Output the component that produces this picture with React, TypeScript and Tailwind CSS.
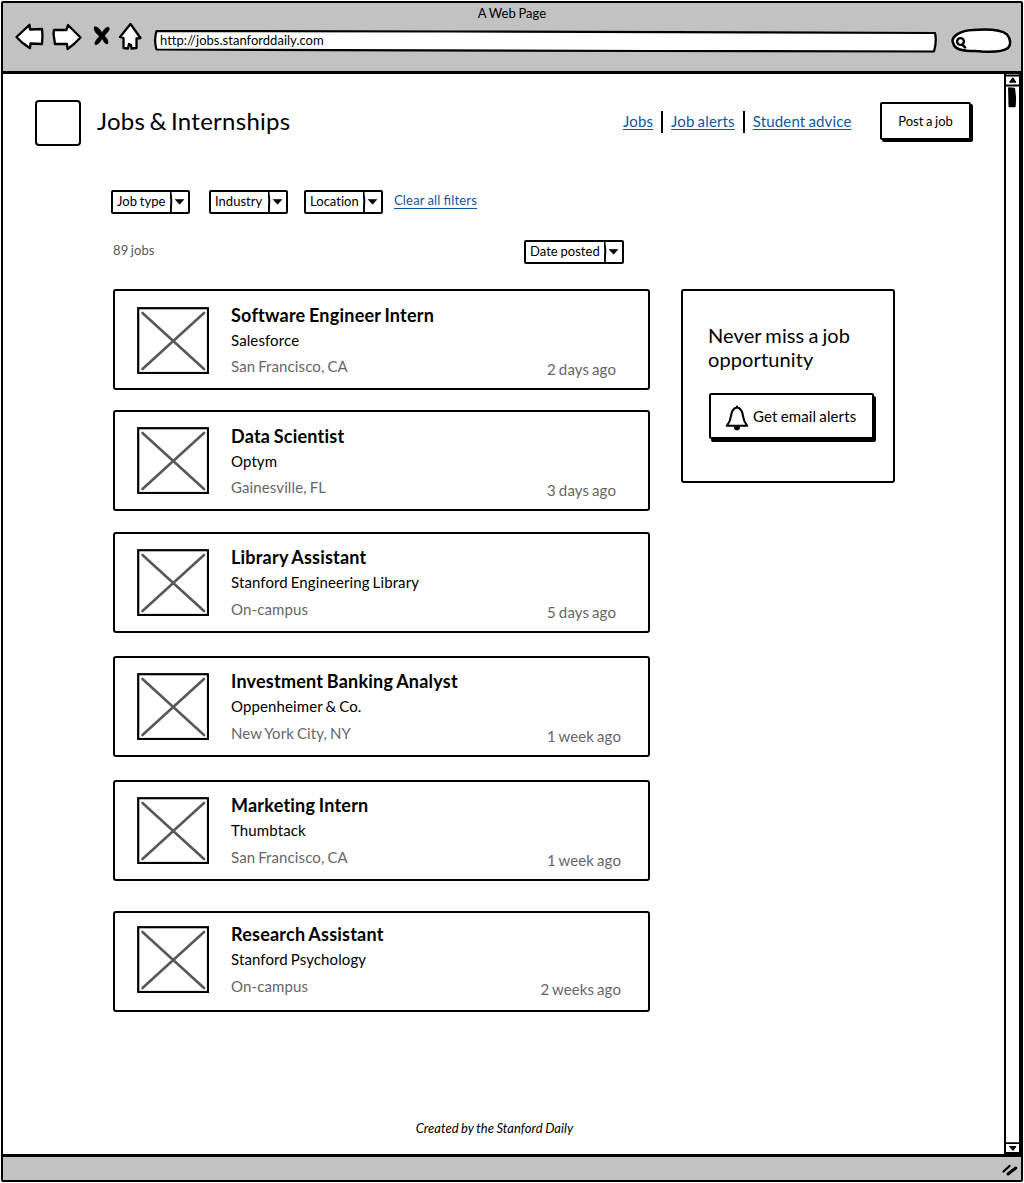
import React from "react";

const jobs = [
  { title: "Software Engineer Intern", company: "Salesforce", place: "San Francisco, CA", age: "2 days ago", box: "mt-0 pt-[16px]", text: "mt-[-4px]", gap: "mt-[5px]", date: "mt-[51px] mr-[32px]" },
  { title: "Data Scientist", company: "Optym", place: "Gainesville, FL", age: "3 days ago", box: "mt-[20px] pt-[15px]", text: "mt-[-3px]", gap: "mt-[5px]", date: "mt-[52px] mr-[32px]" },
  { title: "Library Assistant", company: "Stanford Engineering Library", place: "On-campus", age: "5 days ago", box: "mt-[21px] pt-[15px]", text: "mt-[-4px]", gap: "mt-[6px]", date: "mt-[52px] mr-[32px]" },
  { title: "Investment Banking Analyst", company: "Oppenheimer & Co.", place: "New York City, NY", age: "1 week ago", box: "mt-[23px] pt-[15px]", text: "mt-[-4px]", gap: "mt-[6px]", date: "mt-[52px] mr-[27px]" },
  { title: "Marketing Intern", company: "Thumbtack", place: "San Francisco, CA", age: "1 week ago", box: "mt-[23px] pt-[15px]", text: "mt-[-4px]", gap: "mt-[6px]", date: "mt-[52px] mr-[27px]" },
  { title: "Research Assistant", company: "Stanford Psychology", place: "On-campus", age: "2 weeks ago", box: "mt-[30px] pt-[13px]", text: "mt-[-4px]", gap: "mt-[6px]", date: "mt-[52px] mr-[27px]" },
];

function Select({ label, className }: { label: string; className: string }) {
  return (
    <div className={`flex h-[24px] rounded-[2px] border-2 border-black bg-white text-[13px] leading-[19px] tracking-[0.03px] [word-spacing:-0.6px] ${className}`}>
      <span className="flex-1 whitespace-nowrap pl-[4px]">{label}</span>
      <span className="flex w-[18px] items-center justify-center">
        <svg width="18" height="20" viewBox="0 0 18 20" className="block">
          <path d="M0.4 0L1.3 8L0.8 20" fill="none" stroke="#000" strokeWidth="2" />
          <path d="M5.200 7.500h8.600l-4.200 4.800z" fill="#000" stroke="#000" strokeWidth="0.6" strokeLinejoin="round" />
        </svg>
      </span>
    </div>
  );
}

function Placeholder() {
  return (
    <svg width="72" height="67" viewBox="0 0 72 67" className="block shrink-0">
      <rect x="1.2" y="1.2" width="69.8" height="64.8" fill="#fff" stroke="#000" strokeWidth="2.2" />
      <path d="M5.5 6L67 62M67 6L5.5 62" stroke="#585858" strokeWidth="2.6" strokeLinecap="round" />
    </svg>
  );
}

function Toolbar() {
  return (
    <div className="h-[71px] shrink-0 border-b-[3px] border-black bg-[#c2c2c2]">
      <div className="h-[20px] pt-[1px] text-center text-[13px] leading-[18px] tracking-[0.03px] [word-spacing:-0.6px]">A Web Page</div>
      <div className="flex items-start">
        <svg width="140" height="34" viewBox="3 23 140 34" fill="#fff" stroke="#000" strokeWidth="2.3" strokeLinejoin="round" strokeLinecap="round" className="block shrink-0">
          <path d="M16.500 37L29.500 24.800L30 29.500L42 29L42.500 36L42 44L30.500 43.500L30 48.200L22 42.500Z" />
          <path d="M80.500 37.500L68 25L66.500 30L54 30L53.500 34L55 44L67 44L67.500 49L74 44Z" />
          <path d="M130.500 24L120 37L123.500 38L123.500 48L128 48.500L129 44L131 45L131.500 48.500L136.500 48L136.500 38.500L140.500 38Z" />
          <path d="M94.500 27C98 26 101 31 102 33C103 31 106 26 109 27.500C110.500 31 105 34 104.500 36C107 38 109 42 107.500 44C104 44 103.500 40 102 38.500C100.500 41 98 45.500 95 44.500C94 42 98 38 99.500 36C96.500 34 93 30 94.500 27Z" fill="#000" strokeWidth="0.6" />
        </svg>
        <div className="relative ml-[11px] mt-[6px] h-[24px] w-[783px] pl-[6px] text-[13px] leading-[22px] tracking-[0.02px]">
          <svg width="783" height="24" viewBox="0 0 783 24" fill="#fff" stroke="#000" strokeWidth="2.200" strokeLinejoin="round" className="absolute inset-0">
            <path d="M2.500 2L300 2.500L600 3.400L781 4C782.500 10 781.500 17 780 22.500L500 22L2.500 20.500C0.500 14 0.800 8 2.500 2Z" />
          </svg>
          <span className="relative">http://jobs.stanforddaily.com</span>
        </div>
        <svg width="62" height="26" viewBox="950 27 62 26" fill="#fff" stroke="#000" className="ml-[13px] mt-[4px] block">
          <path d="M952.500 41C952.500 36 960 30.500 973 30C987 29 1002 30 1007 34.500C1011 39 1011 45 1008 48C1003 51.500 990 52 982 51.500C971 50.500 958 52 953.800 45Z" strokeWidth="2.500" />
          <circle cx="960.5" cy="41.500" r="3.400" strokeWidth="2.400" />
          <path d="M962.500 44.800L965 47.300" strokeWidth="2.600" strokeLinecap="round" />
        </svg>
      </div>
    </div>
  );
}

function ScrollBar() {
  return (
    <div className="flex h-full w-[17px] shrink-0 flex-col border-x-2 border-black bg-white">
      <svg width="13" height="34" viewBox="0 0 13 34" className="block">
        <path d="M0 1.500h13M0 11.500h13" stroke="#000" strokeWidth="1.800" />
        <path d="M3.500 8.200L6.800 3.800L10 8.200z" fill="#000" stroke="#000" strokeLinejoin="round" />
        <path d="M2.800 14L8.400 14.500L9.400 24L9 32.500L3.200 32.500L3 23Z" fill="#000" stroke="#000" strokeWidth="1.400" strokeLinejoin="round" />
      </svg>
      <div className="flex-1" />
      <svg width="13" height="13" viewBox="0 0 13 13" className="block">
        <path d="M0 2.200h13M0 12h13" stroke="#000" strokeWidth="1.800" />
        <path d="M3.500 5.500h6.500L7 9.500z" fill="#000" stroke="#000" strokeLinejoin="round" />
      </svg>
    </div>
  );
}

export default function App() {
  return (
    <div className="flex h-[1183px] w-[1024px] bg-white p-[1px] font-['Lato',sans-serif] text-black tracking-[0.11px] [word-spacing:-1px]">
      <div className="flex h-[1181px] w-[1022px] flex-col rounded-[2px] border-2 border-black bg-white">
        <Toolbar />
        <div className="flex h-[1080px]">
          <div className="w-[1001px] shrink-0">
            <header className="flex pt-[26px]">
              <div className="ml-[32px] h-[46px] w-[46px] rounded-[4px] border-2 border-black" />
              <h1 className="ml-[16px] w-[526px] pt-[6px] text-[24px] leading-[30px] tracking-[0.27px] [word-spacing:-2.2px]">Jobs &amp; Internships</h1>
              <nav className="flex w-[257px] whitespace-nowrap pt-[11px] text-[15px] leading-[20px] tracking-[0.16px] text-[#10569c]">
                <a className="underline underline-offset-[2px]">Jobs</a>
                <span className="ml-[8px] h-[22px] w-[2px] bg-black" />
                <a className="ml-[8px] underline underline-offset-[2px]">Job alerts</a>
                <span className="ml-[8px] h-[22px] w-[2px] bg-black" />
                <a className="ml-[8px] underline underline-offset-[2px]">Student advice</a>
              </nav>
              <button className="mt-[2px] h-[38px] w-[91px] rounded-[2px] border-2 border-black bg-white text-[13px] leading-[32px] tracking-[0.03px] shadow-[2px_2px_0_0_#000] [word-spacing:-0.8px]">Post a job</button>
            </header>
            <div className="ml-[108px] mt-[44px] flex text-[13px]">
              <Select label="Job type" className="w-[79px]" />
              <Select label="Industry" className="ml-[19px] w-[79px]" />
              <Select label="Location" className="ml-[16px] w-[79px]" />
              <a className="ml-[11px] mt-[1px] leading-[18px] tracking-[0.18px] text-[#10569c] underline underline-offset-[3px] [font-feature-settings:'liga'_1] [word-spacing:-0.5px]">Clear all filters</a>
            </div>
            <div className="ml-[110px] mt-[26px] flex w-[511px] justify-between">
              <span className="pt-[1px] text-[13px] leading-[18px] text-[#585858]">89 jobs</span>
              <Select label="Date posted" className="w-[100px]" />
            </div>
            <div className="ml-[110px] mt-[25px] flex items-start">
              <main className="w-[537px]">
                {jobs.map((job) => (
                  <article key={job.title} className={`flex h-[101px] rounded-[3px] border-2 border-black pl-[22px] ${job.box}`}>
                    <Placeholder />
                    <div className={`ml-[22px] flex-1 whitespace-nowrap ${job.text}`}>
                      <h2 className="text-[18px] font-bold leading-[24px] tracking-[0.22px]">{job.title}</h2>
                      <p className="mt-[3px] text-[15px] leading-[20px]">{job.company}</p>
                      <p className={`text-[15px] leading-[22px] text-[#666] ${job.gap}`}>{job.place}</p>
                    </div>
                    <span className={`text-[15px] leading-[22px] text-[#666] ${job.date}`}>{job.age}</span>
                  </article>
                ))}
              </main>
              <aside className="ml-[31px] h-[194px] w-[214px] rounded-[3px] border-2 border-black pl-[25px] pt-[32px]">
                <h3 className="w-[160px] text-[20px] leading-[24px] [word-spacing:-1.2px]">Never miss a job opportunity</h3>
                <button className="ml-[1px] mt-[22px] flex h-[46px] w-[165px] items-center rounded-[2px] border-2 border-black bg-white pl-[14px] text-[15px] shadow-[2px_3px_0_0_#000]">
                  <svg width="24" height="26" viewBox="0 0 24 26" className="mt-[3px] block" fill="none" stroke="#000" strokeWidth="2.100" strokeLinecap="round" strokeLinejoin="round">
                    <path d="M12 2.500C7.500 3 6.500 7 6 11C5.500 16 4 18 1.800 20.800H22.200C20 18 18.500 16 18 11C17.500 7 16.500 3 12 2.500Z" />
                    <path d="M12 2V1.500" />
                    <path d="M10 22.200C10.500 25 13.500 25 14 22.200Z" fill="#000" />
                  </svg>
                  <span className="ml-[4px] whitespace-nowrap leading-[20px] [word-spacing:-0.7px]">Get email alerts</span>
                </button>
              </aside>
            </div>
            <footer className="mt-[107px] pr-[18px] text-center text-[13px] italic leading-[18px] tracking-[0.03px] [word-spacing:-0.6px]">Created by the Stanford Daily</footer>
          </div>
          <ScrollBar />
        </div>
        <div className="flex flex-1 justify-end border-t-[3px] border-black bg-[#c2c2c2]">
          <svg width="22" height="22" viewBox="0 0 22 22" className="block" stroke="#000" strokeLinecap="round">
            <path d="M4.500 14.500L10.500 9" strokeWidth="2.300" />
            <path d="M9 17L16.800 11" strokeWidth="2.900" />
          </svg>
        </div>
      </div>
    </div>
  );
}
